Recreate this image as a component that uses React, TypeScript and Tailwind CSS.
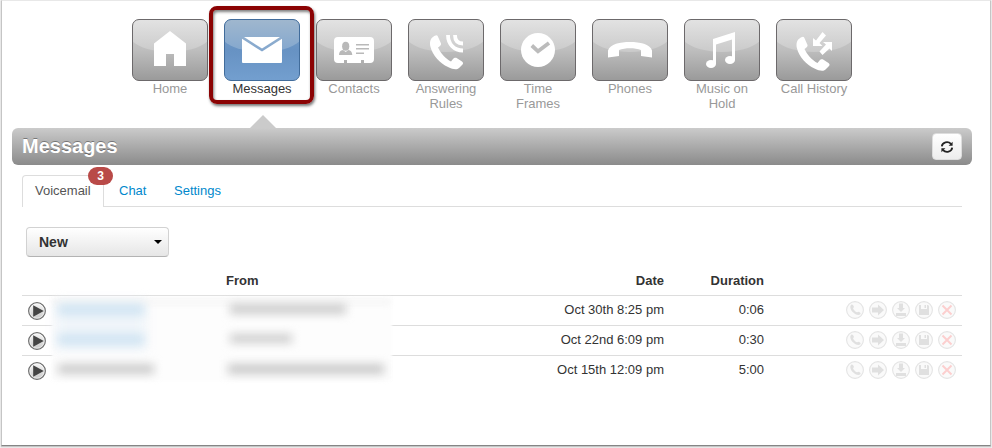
import React from "react";

type NavItem = { label: string; icon: React.ReactNode; active?: boolean };

const handset =
  "M25 18 C22 20 21.500 24 22.500 28 C24.500 36 32 44.500 40 48 C45 50.500 49 51 51 49 L54.500 45.500 C55.500 44.300 55 43.300 54 42.500 L49 39.300 C47.500 38.300 46 39 45 40 L43 42.500 C38 40 32.500 34 30 28.500 C32 27.300 33.500 26 33 24.500 L29.800 17.300 C29 15.500 27 16.500 25 18 Z";

const navItems: NavItem[] = [
  {
    label: "Home",
    icon: <path d="M38 12 L54 24.500 V47 H42 V35 H34 V47 H22 V24.500 Z" />,
  },
  {
    label: "Messages",
    active: true,
    icon: (
      <>
        <path d="M20 18 H56 L38 29.500 Z" />
        <path d="M18 19.800 L38 32.500 L58 19.800 V43 Q58 44 57 44 H19 Q18 44 18 43 Z" />
      </>
    ),
  },
  {
    label: "Contacts",
    icon: (
      <>
        <path d="M22 18 H54 Q58 18 58 22 V40 Q58 44 54 44 H48 V41 H45 V44 H31 V41 H28 V44 H22 Q18 44 18 40 V22 Q18 18 22 18 Z" />
        <g fill="#b9b9b9">
          <ellipse cx="29.700" cy="27.300" rx="3.600" ry="4.500" />
          <path d="M23 36 Q23 31.500 27 31 L29.700 33 L32.400 31 Q36 31.500 36.300 36 Z" />
          <path d="M40 25 H53 V26.500 H40 Z M40 29 H53 V30.500 H40 Z M40 33.500 H48 V35 H40 Z" />
        </g>
      </>
    ),
  },
  {
    label: "Answering Rules",
    icon: (
      <>
        <path d={handset} />
        <g fill="none" stroke="#fff" strokeWidth="3.800">
          <path d="M40 16 C40 25 46 31.500 55 31.500" />
          <path d="M47 16 C47 21.500 49.500 24.500 55 24.500" />
        </g>
      </>
    ),
  },
  {
    label: "Time Frames",
    icon: (
      <>
        <circle cx="38" cy="31" r="17" />
        <path d="M31.800 26.500 L38 32.300 L49 24" fill="none" stroke="#bcbcbc" strokeWidth="3.800" />
      </>
    ),
  },
  {
    label: "Phones",
    icon: (
      <path d="M16 38.500 V31.500 C18 25 28 23 38 23 C48 23 58 25 60 31.500 V38.500 L49 37 V31 C43 28.500 33 28.500 27 31 V37 Z" />
    ),
  },
  {
    label: "Music on Hold",
    icon: (
      <>
        <path d="M29 20 L51 13 V41 H48 V20.500 L32 25.500 V45 H29 Z" />
        <ellipse cx="27" cy="45" rx="5" ry="4" />
        <ellipse cx="46" cy="41" rx="5" ry="4" />
      </>
    ),
  },
  {
    label: "Call History",
    icon: (
      <>
        <path d={handset} transform="translate(-1.500 1.500)" />
        <path d="M37 19 L40 21.500 L46.500 13 L50 16.500 L43.500 24 L46.500 27 H37 Z" />
        <path d="M56 23 H47 L50 25.500 L43.500 32.500 L46.500 36 L53.500 29.500 L56 32 Z" />
      </>
    ),
  },
];

function NavTile({ item, id }: { item: NavItem; id: number }) {
  const a = item.active;
  return (
    <div className="relative flex w-[76px] flex-col items-center">
      <svg width="76" height="62" viewBox="0 0 76 62" className="block">
        <defs>
          <linearGradient id={`b${id}`} x1="0" y1="0" x2="0" y2="1">
            <stop offset="0" stopColor={a ? "#7fa3c7" : "#d0d0d0"} />
            <stop offset="0.5" stopColor={a ? "#6792c3" : "#bebebe"} />
            <stop offset="1" stopColor={a ? "#739fcf" : "#999999"} />
          </linearGradient>
          <linearGradient id={`g${id}`} x1="0" y1="0" x2="0" y2="1">
            <stop offset="0" stopColor={a ? "#a0b7ce" : "#e3e3e3"} />
            <stop offset="1" stopColor={a ? "#83a7ce" : "#cacaca"} />
          </linearGradient>
          <clipPath id={`c${id}`}>
            <rect x="0.5" y="0.5" width="75" height="61" rx="6.500" />
          </clipPath>
        </defs>
        <g clipPath={`url(#c${id})`}>
          <rect width="76" height="62" fill={`url(#b${id})`} />
          <path d="M0 0 H76 V22 C60 36.500 16 36.500 0 22 Z" fill={`url(#g${id})`} />
        </g>
        <rect x="0.5" y="0.5" width="75" height="61" rx="6.500" fill="none" stroke={a ? "#416c9b" : "#6c696b"} />
        <g fill="#fff">{item.icon}</g>
      </svg>
      <span className={a ? "text-center text-[#333]" : "text-center text-[#999]"}>{item.label}</span>
      {a && (
        <div className="absolute -left-[15px] -top-[13px] h-[98px] w-[105px] rounded-[8px] border-4 border-[#8b0304] shadow-[1px_2px_3px_rgba(0,0,0,0.55),inset_1px_2px_3px_rgba(0,0,0,0.5)]" />
      )}
    </div>
  );
}

const actions: React.ReactNode[] = [
  <path d="M5 4 C3.500 5.500 4.500 9 7 11.300 C9 13.500 12.500 15 14.300 13.300 C15 12.300 14.500 11.700 13 10.700 L11 11.300 C9.500 11 7.200 8.500 7 7.300 L8 6 C7 3.500 6 3 5 4 Z" />,
  <path d="M3 6.500 H9 V3.500 L15 9 L9 14.500 V11.500 H3 Z" />,
  <path d="M7 2.500 H11 V7 H13 L9 11 L5 7 H7 Z M4 12 H14 V15 H4 Z" />,
  <path d="M4 4 H6 V8 H12 V4 H13 L14 5 V14 H4 Z M9.500 4 H11 V7 H9.500 Z" />,
  <path d="M4.500 4.500 L13.500 13.500 M13.500 4.500 L4.500 13.500" stroke="#fccfcf" strokeWidth="2" />,
];

function MessageRow({ date, duration }: { date: string; duration: string }) {
  return (
    <div className="flex h-[30px] border-t border-[#ddd]">
      <div className="w-[380px] pl-[6px] pt-[6px]">
        <svg width="18" height="18" viewBox="0 0 18 18" className="block">
          <circle cx="9" cy="9" r="8.300" fill="url(#play)" stroke="#6e6e6e" strokeWidth="1.300" />
          <circle cx="9" cy="9" r="7.200" fill="none" stroke="#fff" strokeOpacity="0.6" strokeWidth="0.9" />
          <path d="M5.200 3.200 L15.800 9 L5.200 14.800 Z" fill="#444" />
        </svg>
      </div>
      <span className="w-[262px] pt-[5px] text-right">{date}</span>
      <span className="w-[100px] pt-[5px] text-right">{duration}</span>
      <div className="flex flex-1 justify-end gap-[5px] pr-[6px] pt-[5px]">
        {actions.map((path, i) => (
          <svg key={i} width="18" height="18" viewBox="0 0 18 18" className="block">
            <circle cx="9" cy="9" r="8.400" fill="#fafafa" stroke="#e4e4e4" strokeWidth="1.100" />
            <g fill="#e0e0e0">{path}</g>
          </svg>
        ))}
      </div>
    </div>
  );
}

export default function App() {
  return (
    <div className="h-[448px] w-[992px] overflow-hidden bg-[#f0f0f0] pl-px font-['Liberation_Sans',Arial,sans-serif] text-[13px] leading-[18px] text-[#333]">
      <div className="h-[446px] w-[990px] border border-b-[#858585] border-l-[#c5c5c5] border-r-[#c5c5c5] border-t-[#e8e8e8] bg-white shadow-[0_1px_1px_#c5c5c5]">
        <nav className="flex h-[127px] gap-4 pl-[130px] pt-[18px] leading-[15px]">
          {navItems.map((item, i) => (
            <NavTile key={item.label} item={item} id={i} />
          ))}
        </nav>
        <header className="relative ml-[10px] flex h-[37px] w-[960px] items-center justify-between rounded-[6px] bg-linear-to-b from-[#cbcbcb] to-[#8b8b8b] pl-[10px] pr-[10px]">
          <div className="absolute -top-[13px] left-[238px] border-x-[13px] border-b-[13px] border-x-transparent border-b-[#cbcbcb]" />
          <h1 className="pb-[2px] text-[20px] font-bold text-white [text-shadow:0_-1px_0_rgba(0,0,0,0.35)]">Messages</h1>
          <button className="flex h-[27px] w-[30px] items-center justify-center rounded-[4px] border border-[#ddd] bg-linear-to-b from-white to-[#ededed]">
            <svg width="14" height="14" viewBox="0 0 14 14" fill="none" stroke="#222" strokeWidth="1.800">
              <path d="M1.800 6.300 C2.300 2 8 .8 11 3.800 M12.200 7.700 C11.700 12 6 13.200 3 10.200" />
              <path d="M12.600 1.800 V5.800 H8.600 Z M1.400 12.200 V8.200 H5.400 Z" fill="#222" stroke="none" />
            </svg>
          </button>
        </header>
        <div className="ml-5 mt-[10px] flex h-8 w-[940px] gap-[2px] border-b border-[#ddd]">
          <div className="relative h-8 w-[82px] rounded-t-[4px] border border-b-0 border-[#ddd] bg-white pl-3 pt-[6px] text-[#555]">
            Voicemail
            <span className="absolute -top-[9px] left-[65px] h-[18px] w-[25px] rounded-[9px] bg-[#b94a48] text-center text-[12px] font-bold text-white">
              3
            </span>
          </div>
          <span className="w-[53px] pl-[13px] pt-[7px] text-[#0088cc]">Chat</span>
          <span className="pl-[13px] pt-[7px] text-[#0088cc]">Settings</span>
        </div>
        <button className="ml-6 mt-5 flex h-[30px] w-[143px] items-center justify-between rounded-[4px] border border-[#d2d2d2] border-b-[#b3b3b3] bg-linear-to-b from-white to-[#e6e6e6] pl-3 pr-[6px] text-[14px] font-bold">
          New
          <span className="border-x-4 border-t-4 border-x-transparent border-t-black" />
        </button>
        <div className="relative ml-5 mt-[9px] w-[940px]">
          <div className="flex h-[29px] pt-[6px] font-bold">
            <span className="w-[380px] pl-[204px]">From</span>
            <span className="w-[262px] text-right">Date</span>
            <span className="w-[100px] text-right">Duration</span>
          </div>
          <svg width="0" height="0" className="absolute">
            <defs>
              <linearGradient id="play" x1="0" y1="0" x2="0" y2="1">
                <stop offset="0" stopColor="#f8f8f8" />
                <stop offset="1" stopColor="#c8c8c8" />
              </linearGradient>
            </defs>
          </svg>
          <MessageRow date="Oct 30th 8:25 pm" duration="0:06" />
          <MessageRow date="Oct 22nd 6:09 pm" duration="0:30" />
          <MessageRow date="Oct 15th 12:09 pm" duration="5:00" />
          <div className="absolute left-[30px] top-[31px] h-[84px] w-[340px]">
            <div className="absolute inset-0 bg-[#fdfdfd] blur-[1px]" />
            <div className="absolute left-1 top-[5px] h-[48px] w-[90px] bg-[#f0f5fa] blur-[6px]" />
            <div className="absolute left-0 top-[3px] h-[4px] w-[338px] bg-[#f3f3f3] blur-[3px]" />
            <div className="absolute left-[6px] top-[7px] h-[11px] w-[86px] bg-[#d0e4f2] blur-[5px]" />
            <div className="absolute left-[6px] top-[37px] h-[11px] w-[86px] bg-[#d0e4f2] blur-[5px]" />
            <div className="absolute left-[6px] top-[67px] h-[10px] w-[96px] bg-[#cbcbcb] blur-[5px]" />
            <div className="absolute left-[178px] top-[7px] h-[10px] w-[116px] bg-[#cccccc] blur-[5px]" />
            <div className="absolute left-[178px] top-[37px] h-[9px] w-[62px] bg-[#cdcdcd] blur-[5px]" />
            <div className="absolute left-[176px] top-[67px] h-[10px] w-[156px] bg-[#c8c8c8] blur-[5px]" />
          </div>
        </div>
      </div>
    </div>
  );
}
